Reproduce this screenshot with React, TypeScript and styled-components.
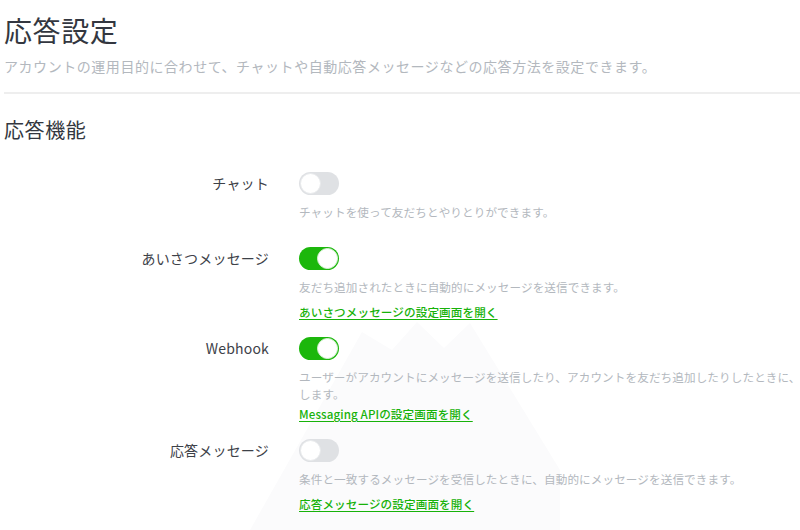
import React from 'react';
import styled, { createGlobalStyle } from 'styled-components';

const colors = {
  text: '#333740',
  label: '#3d4148',
  muted: '#b3b8be',
  divider: '#eeeeee',
  green: '#1cb70c',
  link: '#17b20a',
  off: '#dfe1e4',
  watermark: '#fbfbfc',
};

const GlobalStyle = createGlobalStyle`
  html, body {
    margin: 0;
    padding: 0;
    background: #ffffff;
    overflow: hidden;
  }
  body {
    font-family: "Noto Sans CJK JP", "Noto Sans", sans-serif;
    color: ${colors.text};
  }
`;

const Page = styled.div`
  position: relative;
  width: 800px;
  height: 530px;
  overflow: hidden;
  padding-left: 4px;
  box-sizing: border-box;
`;

const Watermark = styled.svg`
  position: absolute;
  left: 0;
  top: 0;
  width: 800px;
  height: 530px;
  z-index: 0;
  pointer-events: none;
`;

const Content = styled.div`
  position: relative;
  z-index: 1;
`;

const PageHeader = styled.header`
  padding-top: 10px;
  padding-bottom: 16px;
  border-bottom: 2px solid ${colors.divider};

  h1 {
    margin: 0;
    font-size: 28px;
    font-weight: 400;
    line-height: 40px;
    letter-spacing: 0.6px;
  }

  p {
    margin: 6px 0 0;
    font-size: 14px;
    line-height: 20px;
    letter-spacing: 0.55px;
    color: ${colors.muted};
  }
`;

const SectionTitle = styled.h2`
  margin: 21px 0 0;
  font-size: 20px;
  font-weight: 400;
  line-height: 30px;
  letter-spacing: 0.6px;
`;

const SettingList = styled.div`
  margin-top: 27px;
  display: flex;
  flex-direction: column;
`;

const SettingRow = styled.div`
  display: grid;
  grid-template-columns: 265px max-content;
  column-gap: 30px;
  padding-bottom: 16px;
`;

const Label = styled.div`
  text-align: right;
  font-size: 14px;
  line-height: 22px;
  letter-spacing: 0.2px;
  color: ${colors.label};
`;

const Body = styled.div`
  display: flex;
  flex-direction: column;
  align-items: flex-start;
`;

const Toggle = styled.span<{ $on: boolean }>`
  position: relative;
  display: block;
  width: 40px;
  height: 23px;
  border-radius: 12px;
  background: ${(p) => (p.$on ? colors.green : colors.off)};
  margin-bottom: 9px;

  &::after {
    content: '';
    position: absolute;
    top: 1px;
    left: ${(p) => (p.$on ? '18px' : '1px')};
    width: 19px;
    height: 19px;
    border-radius: 50%;
    background: #ffffff;
    border: 1px solid ${(p) => (p.$on ? '#d9f2d6' : '#e8eaec')};
  }
`;

const Description = styled.p`
  margin: 0 0 5px;
  min-height: 22px;
  font-size: 11.6px;
  line-height: 17px;
  letter-spacing: 0.1px;
  white-space: nowrap;
  color: ${colors.muted};
`;

const SettingLink = styled.a`
  margin-top: -2px;
  font-size: 11.6px;
  line-height: 17px;
  font-weight: 500;
  letter-spacing: 0.1px;
  color: ${colors.link};
  text-decoration: underline;
  text-underline-offset: 2px;
  cursor: pointer;
`;

type Setting = {
  label: string;
  on: boolean;
  description: React.ReactNode;
  link?: string;
};

const settings: Setting[] = [
  {
    label: 'チャット',
    on: false,
    description: 'チャットを使って友だちとやりとりができます。',
  },
  {
    label: 'あいさつメッセージ',
    on: true,
    description: '友だち追加されたときに自動的にメッセージを送信できます。',
    link: 'あいさつメッセージの設定画面を開く',
  },
  {
    label: 'Webhook',
    on: true,
    description: (
      <>
        ユーザーがアカウントにメッセージを送信したり、アカウントを友だち追加したりしたときに、いろいろなイベントを通知
        <br />
        します。
      </>
    ),
    link: 'Messaging APIの設定画面を開く',
  },
  {
    label: '応答メッセージ',
    on: false,
    description: '条件と一致するメッセージを受信したときに、自動的にメッセージを送信できます。',
    link: '応答メッセージの設定画面を開く',
  },
];

export default function App() {
  return (
    <>
      <GlobalStyle />
      <Page>
        <Watermark viewBox="0 0 800 530">
          <path
            d="M250 530 L362 332 L392 350 L417 322 L444 348 L470 323 L560 470 L560 530 Z"
            fill={colors.watermark}
          />
        </Watermark>
        <Content>
          <PageHeader>
            <h1>応答設定</h1>
            <p>アカウントの運用目的に合わせて、チャットや自動応答メッセージなどの応答方法を設定できます。</p>
          </PageHeader>
          <SectionTitle>応答機能</SectionTitle>
          <SettingList>
            {settings.map((s) => (
              <SettingRow key={s.label}>
                <Label>{s.label}</Label>
                <Body>
                  <Toggle $on={s.on} />
                  <Description>{s.description}</Description>
                  {s.link && <SettingLink>{s.link}</SettingLink>}
                </Body>
              </SettingRow>
            ))}
          </SettingList>
        </Content>
      </Page>
    </>
  );
}
